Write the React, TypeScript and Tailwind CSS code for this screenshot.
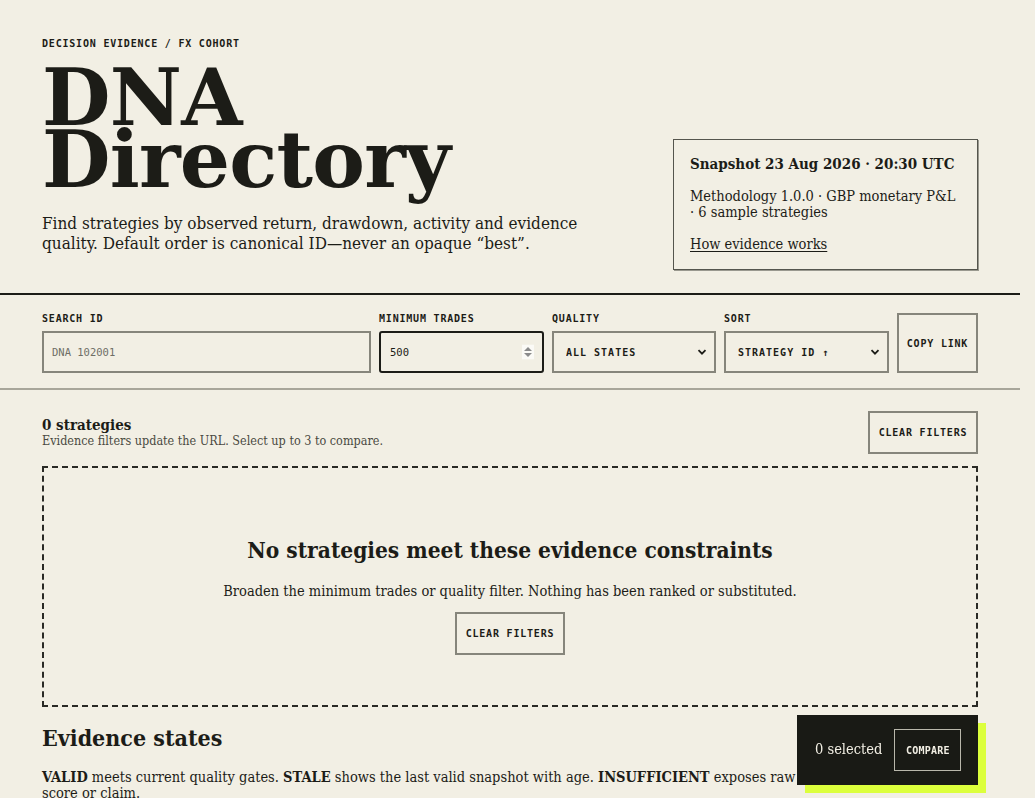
import { useState } from 'react';

const SERIF = 'font-["DejaVu_Serif_Condensed","DejaVu_Serif",Georgia,serif]';
const DISPLAY = 'font-["DejaVu_Serif",Georgia,serif]';
const MONO = 'font-["DejaVu_Sans_Mono","Liberation_Mono",monospace]';

function Chevron() {
  return (
    <svg width="10" height="10" viewBox="0 0 10 10" fill="none" className="pointer-events-none absolute right-[9px] top-1/2 -translate-y-1/2 text-[#1c1c17]">
      <path d="M1.5 3.2L5 6.7l3.5-3.5" stroke="currentColor" strokeWidth="1.8" />
    </svg>
  );
}

function Label({ children }: { children: React.ReactNode }) {
  return <div className={`${MONO} text-[10px] font-bold tracking-[0.08em] text-[#1c1c17] mb-[6px] leading-[12px]`}>{children}</div>;
}

function GhostButton({ children, className = '' }: { children: React.ReactNode; className?: string }) {
  return (
    <button className={`${MONO} border-2 border-[#86857b] bg-transparent text-[10px] font-bold tracking-[0.08em] text-[#1c1c17] ${className}`}>
      {children}
    </button>
  );
}

export default function App() {
  const [search, setSearch] = useState('');
  const [minTrades, setMinTrades] = useState('500');

  return (
    <div className="h-screen overflow-y-scroll bg-[#f2efe4]">
      <div className={`w-[1020px] min-h-[1200px] text-[#1c1c17] ${SERIF}`}>
        {/* Header */}
        <header className="px-[42px] pt-[38px] pb-[23px] flex items-end justify-between">
          <div className="pb-[17px]">
            <div className={`${MONO} text-[10px] font-bold tracking-[0.08em] leading-[12px]`}>DECISION EVIDENCE / FX COHORT</div>
            <h1 className={`${DISPLAY} mt-[17px] text-[79px] font-bold leading-[62px] tracking-[-0.01em]`}>
              DNA<br />Directory
            </h1>
            <p className="mt-[22px] w-[560px] text-[17px] leading-[20px]">
              Find strategies by observed return, drawdown, activity and evidence quality. Default order is canonical ID—never an opaque “best”.
            </p>
          </div>
          <div className="w-[305px] border border-[#55554d] shadow-[1px_1px_0_#9a998f] px-[16px] pt-[14px] pb-[16px]">
            <div className="text-[15px] font-bold leading-[20px]">Snapshot 23 Aug 2026 · 20:30 UTC</div>
            <div className="mt-[14px] text-[14.5px] leading-[16px]">Methodology 1.0.0 · GBP monetary P&amp;L · 6 sample strategies</div>
            <a href="#" className="mt-[15px] block text-[14.5px] leading-[18px] underline underline-offset-2">How evidence works</a>
          </div>
        </header>

        {/* Filters */}
        <section className="border-t-2 border-[#1c1c17] border-b-2 border-b-[#a8a69a] px-[42px] pt-[18px] pb-[15px]">
          <div className="grid grid-cols-[329px_165px_164px_165px_1fr] gap-x-[8px] items-end">
            <div>
              <Label>SEARCH ID</Label>
              <input
                value={search}
                onChange={(e) => setSearch(e.target.value)}
                placeholder="DNA_102001"
                className={`${MONO} h-[42px] w-full border-2 border-[#86857b] bg-transparent px-[8px] py-0 text-[10.5px] leading-[20px] placeholder:text-[#6f6e66] outline-none`}
              />
            </div>
            <div>
              <Label>MINIMUM TRADES</Label>
              <div className="relative">
                <input
                  value={minTrades}
                  onChange={(e) => setMinTrades(e.target.value)}
                  className={`${MONO} h-[42px] w-full rounded-[3px] border-2 border-[#1c1c17] bg-transparent px-[9px] py-0 text-[10.5px] leading-[20px] font-medium outline-none`}
                />
                <svg width="12" height="15" viewBox="0 0 12 15" className="absolute right-[10px] top-1/2 -translate-y-1/2">
                  <rect width="12" height="15" fill="#fbfaf6" />
                  <path d="M6 2.5L10 6.5H2Z" fill="#8b8b8b" />
                  <path d="M6 12.5L10 8.5H2Z" fill="#8b8b8b" />
                </svg>
              </div>
            </div>
            <div>
              <Label>QUALITY</Label>
              <div className="relative">
                <select className={`${MONO} h-[42px] w-full appearance-none border-2 border-[#86857b] bg-transparent px-[12px] text-[10px] font-bold tracking-[0.1em] outline-none`}>
                  <option>ALL STATES</option>
                  <option>VALID</option>
                  <option>STALE</option>
                  <option>INSUFFICIENT</option>
                </select>
                <Chevron />
              </div>
            </div>
            <div>
              <Label>SORT</Label>
              <div className="relative">
                <select className={`${MONO} h-[42px] w-full appearance-none border-2 border-[#86857b] bg-transparent px-[12px] text-[10px] font-bold tracking-[0.1em] outline-none`}>
                  <option>STRATEGY ID ↑</option>
                  <option>STRATEGY ID ↓</option>
                </select>
                <Chevron />
              </div>
            </div>
            <GhostButton className="h-[60px] w-full">COPY LINK</GhostButton>
          </div>
        </section>

        {/* Results */}
        <main className="px-[42px] pt-[21px]">
          <div className="flex items-start justify-between">
            <div className="pt-[7px]">
              <div className="text-[15px] font-bold leading-[14px]">0 strategies</div>
              <div className="mt-[1px] text-[12.5px] leading-[15px] text-[#4a4a42]">Evidence filters update the URL. Select up to 3 to compare.</div>
            </div>
            <GhostButton className="h-[43px] w-[110px]">CLEAR FILTERS</GhostButton>
          </div>

          <div className="mt-[12px] flex h-[241px] flex-col items-center justify-center border-2 border-dashed border-[#2a2a25] pt-[17px]">
            <h2 className="text-[22.5px] font-bold leading-[28px]">No strategies meet these evidence constraints</h2>
            <p className="mt-[18px] text-[14.5px] leading-[18px]">Broaden the minimum trades or quality filter. Nothing has been ranked or substituted.</p>
            <GhostButton className="mt-[12px] h-[43px] w-[110px]">CLEAR FILTERS</GhostButton>
          </div>

          <h2 className="mt-[17px] text-[23px] font-bold leading-[28px]">Evidence states</h2>
          <p className="mt-[17px] text-[14.5px] leading-[16px]">
            <b>VALID</b> meets current quality gates. <b>STALE</b> shows the last valid snapshot with age. <b>INSUFFICIENT</b> exposes raw activity without a quality score or claim.
          </p>
        </main>
      </div>

      {/* Compare tray */}
      <div className={`${SERIF} fixed bottom-[13px] right-[57px] flex h-[70px] w-[181px] items-center gap-[12px] bg-[#191a15] pl-[18px] shadow-[8px_8px_0_#dcff3c]`}>
        <span className="text-[14.5px] text-[#f2efe4]">0 selected</span>
        <button className={`${MONO} h-[42px] w-[67px] border border-[#b9b7ab] text-[10px] font-bold tracking-[0.02em] text-[#f2efe4]`}>COMPARE</button>
      </div>
    </div>
  );
}
